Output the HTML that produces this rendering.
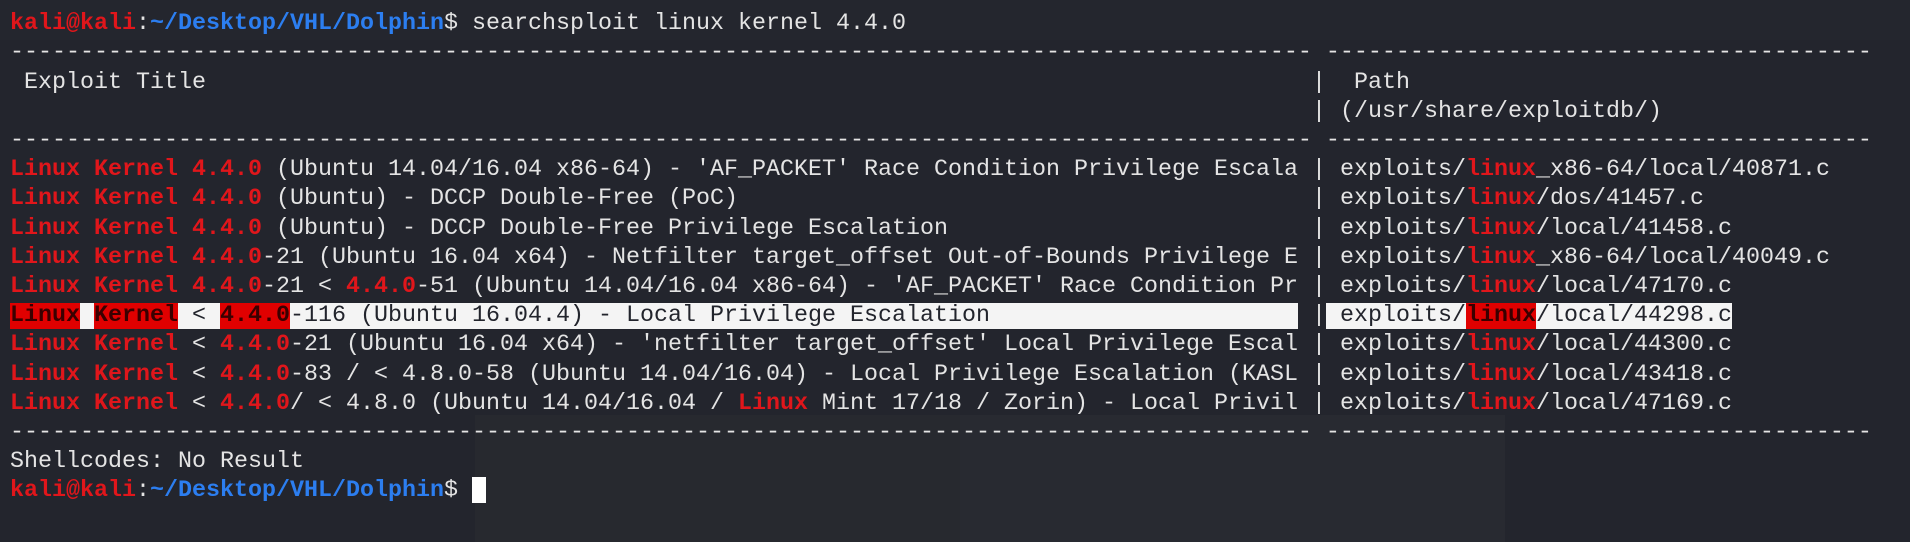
<!DOCTYPE html>
<html><head><meta charset="utf-8"><style>
html,body{margin:0;padding:0;width:1910px;height:542px;overflow:hidden;background:#23252d;}
.bg1{position:absolute;left:0;top:0;width:1910px;height:40px;background:#24262e;}
.bg2{position:absolute;left:475px;top:415px;width:795px;height:127px;background:#27292f;}
.bg3{position:absolute;left:960px;top:415px;width:545px;height:127px;background:#282a31;}
.l{position:absolute;left:10px;height:29px;line-height:29px;font-family:"Liberation Mono","DejaVu Sans Mono",monospace;font-size:23.33px;color:#e4e4e4;white-space:pre;margin-top:-14.5px;}
.r{color:#e0161b;font-weight:bold;}
.b{color:#2c7ef0;font-weight:bold;}
.w{background:#f4f4f4;color:#22242c;}
.rb{background:#e00000;color:#3a0000;font-weight:bold;}
.cur{display:inline-block;width:14px;height:26px;background:#fff;vertical-align:middle;}
</style></head><body>
<div class="bg1"></div><div class="bg2"></div><div class="bg3"></div>

<div class="l" style="top:24px"><span class="r">kali@kali</span>:<span class="b">~/Desktop/VHL/Dolphin</span>$ searchsploit linux kernel 4.4.0</div>
<div class="l" style="top:53px">--------------------------------------------------------------------------------------------- ---------------------------------------</div>
<div class="l" style="top:83px"> Exploit Title</div><div class="l" style="top:83px;left:1312px">|  Path</div>
<div class="l" style="top:112px;left:1312px">| (/usr/share/exploitdb/)</div>
<div class="l" style="top:141px">--------------------------------------------------------------------------------------------- ---------------------------------------</div>

<div class="l" style="top:170px"><span class="r">Linux Kernel 4.4.0</span> (Ubuntu 14.04/16.04 x86-64) - 'AF_PACKET' Race Condition Privilege Escala</div>
<div class="l" style="top:170px;left:1312px">| exploits/<span class="r">linux</span>_x86-64/local/40871.c</div>

<div class="l" style="top:199px"><span class="r">Linux Kernel 4.4.0</span> (Ubuntu) - DCCP Double-Free (PoC)</div>
<div class="l" style="top:199px;left:1312px">| exploits/<span class="r">linux</span>/dos/41457.c</div>

<div class="l" style="top:229px"><span class="r">Linux Kernel 4.4.0</span> (Ubuntu) - DCCP Double-Free Privilege Escalation</div>
<div class="l" style="top:229px;left:1312px">| exploits/<span class="r">linux</span>/local/41458.c</div>

<div class="l" style="top:258px"><span class="r">Linux Kernel 4.4.0</span>-21 (Ubuntu 16.04 x64) - Netfilter target_offset Out-of-Bounds Privilege E</div>
<div class="l" style="top:258px;left:1312px">| exploits/<span class="r">linux</span>_x86-64/local/40049.c</div>

<div class="l" style="top:287px"><span class="r">Linux Kernel 4.4.0</span>-21 &lt; <span class="r">4.4.0</span>-51 (Ubuntu 14.04/16.04 x86-64) - 'AF_PACKET' Race Condition Pr</div>
<div class="l" style="top:287px;left:1312px">| exploits/<span class="r">linux</span>/local/47170.c</div>

<div class="l" style="top:316px"><span class="rb">Linux</span><span class="w"> </span><span class="rb">Kernel</span><span class="w"> &lt; </span><span class="rb">4.4.0</span><span class="w">-116 (Ubuntu 16.04.4) - Local Privilege Escalation                      </span></div>
<div class="l" style="top:316px;left:1312px">|<span class="w"> exploits/</span><span class="rb">linux</span><span class="w">/local/44298.c</span></div>

<div class="l" style="top:345px"><span class="r">Linux Kernel</span> &lt; <span class="r">4.4.0</span>-21 (Ubuntu 16.04 x64) - 'netfilter target_offset' Local Privilege Escal</div>
<div class="l" style="top:345px;left:1312px">| exploits/<span class="r">linux</span>/local/44300.c</div>

<div class="l" style="top:375px"><span class="r">Linux Kernel</span> &lt; <span class="r">4.4.0</span>-83 / &lt; 4.8.0-58 (Ubuntu 14.04/16.04) - Local Privilege Escalation (KASL</div>
<div class="l" style="top:375px;left:1312px">| exploits/<span class="r">linux</span>/local/43418.c</div>

<div class="l" style="top:404px"><span class="r">Linux Kernel</span> &lt; <span class="r">4.4.0</span>/ &lt; 4.8.0 (Ubuntu 14.04/16.04 / <span class="r">Linux</span> Mint 17/18 / Zorin) - Local Privil</div>
<div class="l" style="top:404px;left:1312px">| exploits/<span class="r">linux</span>/local/47169.c</div>

<div class="l" style="top:433px">--------------------------------------------------------------------------------------------- ---------------------------------------</div>
<div class="l" style="top:462px">Shellcodes: No Result</div>
<div class="l" style="top:491px"><span class="r">kali@kali</span>:<span class="b">~/Desktop/VHL/Dolphin</span>$ <span class="cur"></span></div>
</body></html>
